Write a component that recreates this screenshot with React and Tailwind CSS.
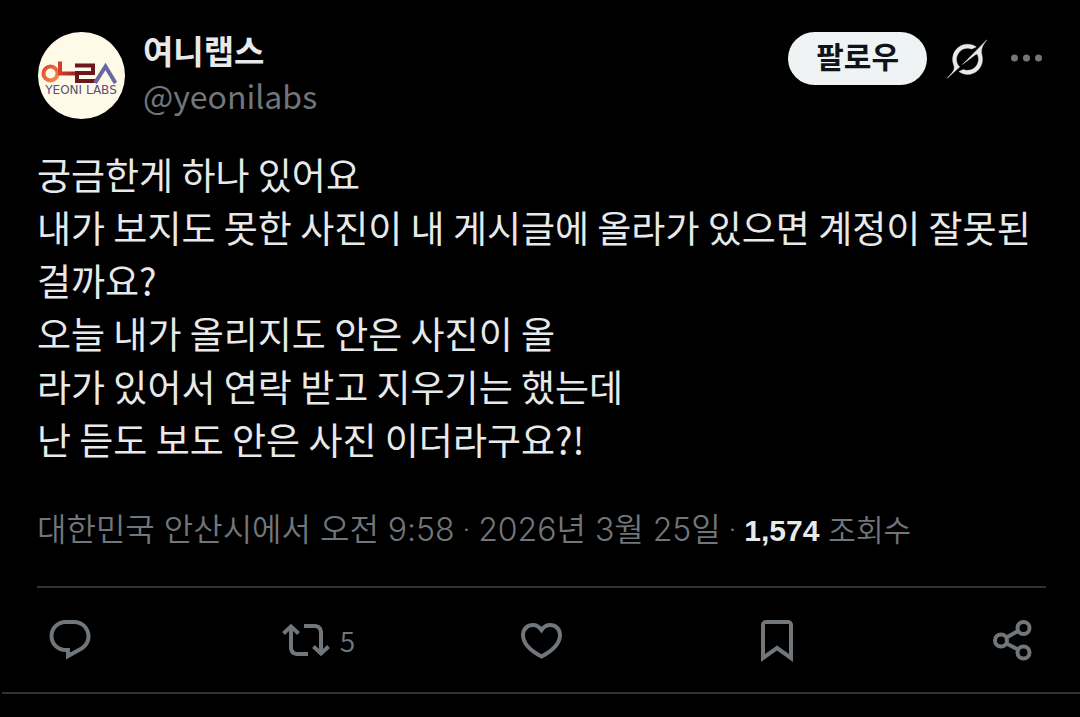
const icons = {
  reply:
    "M1.751 10c0-4.42 3.584-8 8.005-8h4.366c4.49 0 8.129 3.64 8.129 8.13 0 2.96-1.607 5.68-4.196 7.11l-8.054 4.46v-3.69h-.067c-4.49.1-8.183-3.51-8.183-8.01zm8.005-6c-3.317 0-6.005 2.69-6.005 6 0 3.37 2.77 6.08 6.138 6.01l.351-.01h1.761v2.3l5.087-2.81c1.951-1.08 3.163-3.13 3.163-5.36 0-3.39-2.744-6.13-6.129-6.13H9.756z",
  repost:
    "M4.5 3.88l4.432 4.14-1.364 1.46L5.5 7.55V16c0 1.1.896 2 2 2H13v2H7.5c-2.209 0-4-1.79-4-4V7.55L1.432 9.48.068 8.02 4.5 3.88zM16.5 6H11V4h5.5c2.209 0 4 1.79 4 4v8.45l2.068-1.93 1.364 1.46-4.432 4.14-4.432-4.14 1.364-1.46 2.068 1.93V8c0-1.1-.896-2-2-2z",
  bookmark:
    "M4 4.5C4 3.12 5.119 2 6.5 2h11C18.881 2 20 3.12 20 4.5v18.44l-8-5.71-8 5.71V4.5zM6.5 4c-.276 0-.5.22-.5.5v14.56l6-4.29 6 4.29V4.5c0-.28-.224-.5-.5-.5h-11z",
  grok:
    "M12.745 20.54l10.97-8.19c.539-.4 1.307-.244 1.564.38 1.349 3.288.746 7.241-1.938 9.955-2.683 2.714-6.417 3.31-9.83 1.954l-3.728 1.745c5.347 3.697 11.84 2.782 15.898-1.324 3.219-3.255 4.216-7.692 3.284-11.693l.008.009c-1.351-5.878.332-8.227 3.782-13.031L33 0l-4.54 4.59v-.014L12.743 20.544m-2.263 1.987c-3.837-3.707-3.175-9.446.1-12.755 2.42-2.449 6.388-3.448 9.852-1.979l3.72-1.737c-.67-.49-1.53-1.017-2.515-1.387-4.455-1.854-9.789-.931-13.41 2.728-3.483 3.523-4.579 8.94-2.697 13.561 1.405 3.454-.899 5.898-3.22 8.364C1.49 30.2.666 31.074 0 32l10.478-9.466",
};

const lines = [
  "궁금한게 하나 있어요",
  "내가 보지도 못한 사진이 내 게시글에 올라가 있으면 계정이 잘못된 걸까요?",
  "오늘 내가 올리지도 안은 사진이 올",
  "라가 있어서 연락 받고 지우기는 했는데",
  "난 듣도 보도 안은 사진 이더라구요?!",
];

const Avatar = () => (
  <svg viewBox="0 0 87 87" className="size-[87px] shrink-0 rounded-full bg-[#fff9e8]">
    <defs>
      <linearGradient id="ring" x1="0" y1="0" x2="1" y2="1">
        <stop offset="0" stopColor="#dd4a2c" />
        <stop offset="1" stopColor="#f58a4c" />
      </linearGradient>
      <linearGradient id="bar" x1="21" x2="41" y1="0" y2="0" gradientUnits="userSpaceOnUse">
        <stop offset="0" stopColor="#d8402f" />
        <stop offset="1" stopColor="#8e1f26" />
      </linearGradient>
    </defs>
    <g fill="none" strokeWidth="4">
      <circle cx="12.500" cy="41.500" r="7" stroke="url(#ring)" />
      <path d="M22 29.500v12h17" stroke="url(#bar)" />
      <path d="M37 33.500h18v7.500H39v8h18" stroke="#6b1720" />
      <path d="M57 51L67.500 34.500L77.500 51" stroke="#6868a0" />
    </g>
    <text
      x="43"
      y="62"
      textAnchor="middle"
      fontSize="12"
      fill="#55507c"
      className="font-['DejaVu_Sans']"
    >
      YEONI LABS
    </text>
  </svg>
);

const Icon = ({ d }) => (
  <svg viewBox="0 0 24 24" fill="currentColor" className="size-12 shrink-0">
    <path d={d} />
  </svg>
);

const HeartIcon = () => (
  <svg viewBox="0 0 48 48" fill="none" stroke="currentColor" strokeWidth="4" className="size-12 shrink-0">
    <path d="M23.500 14C21 10.500 18 9 15 9C9.500 9 5 13 5 19C5 27.500 13 35 23.500 40.500C34 35 42 27.500 42 19C42 13 37.500 9 32 9C29 9 26 10.500 23.500 14Z" />
  </svg>
);

const ShareIcon = () => (
  <svg viewBox="0 0 48 48" fill="none" stroke="currentColor" strokeWidth="4" className="size-12 shrink-0">
    <circle cx="12" cy="24.500" r="6" />
    <circle cx="34.500" cy="12" r="6" />
    <circle cx="34.500" cy="36.500" r="6" />
    <path d="M17.500 21.500L29 15M17.500 27.500L29 33.500" />
  </svg>
);

const Dot = () => <span className="font-['Roboto'] whitespace-pre">{" · "}</span>;

const App = () => {
  return (
    <main className="min-h-screen bg-black pl-[2px] font-['Noto_Sans_CJK_KR',sans-serif] text-[#e7e9ea]">
      <article className="border-b-2 border-[#2f3336] pt-8">
        <header className="flex items-start gap-[18px] pr-[33px] pl-9">
          <Avatar />
          <div className="min-w-0 flex-1">
            <h1 className="text-[33px] leading-9 font-bold">여니랩스</h1>
            <a href="#profile" className="block text-[32px] leading-[54px] text-[#71767b]">
              @yeonilabs
            </a>
          </div>
          <div className="flex items-center gap-5">
            <button className="h-[53px] rounded-full bg-[#eff3f4] px-7 pb-2 text-[30px] leading-[44px] font-bold text-[#0f1419]">
              팔로우
            </button>
            <button aria-label="Grok">
              <svg
                viewBox="0 0 33 32"
                fill="currentColor"
                stroke="currentColor"
                strokeWidth="0.300"
                className="size-10"
              >
                <path d={icons.grok} />
              </svg>
            </button>
            <button aria-label="더 보기" className="text-[#71767b]">
              <svg viewBox="0 0 40 40" fill="currentColor" className="size-10">
                <circle cx="7.500" cy="19" r="3.500" />
                <circle cx="19.500" cy="19" r="3.500" />
                <circle cx="31.500" cy="19" r="3.500" />
              </svg>
            </button>
          </div>
        </header>

        <div className="pt-[26px] pr-8 pl-[35px] text-[37px] leading-[53px]">
          {lines.map((line) => (
            <p key={line}>{line}</p>
          ))}
        </div>

        <p className="px-[35px] pt-[39px] text-[32px] leading-[50px] font-[350] text-[#71767b] font-['Inter','Noto_Sans_CJK_KR',sans-serif]">
          대한민국 안산시에서 오전 9:58
          <Dot />
          2026년 3월 25일
          <Dot />
          <b className="font-['Liberation_Sans'] text-[30px] font-bold text-[#e7e9ea]">1,574</b>{" "}
          <span className="text-[30px]">조회수</span>
        </p>

        <div className="mr-[34px] ml-[35px] mt-[30px] border-t-2 border-[#2f3336]" />

        <div className="flex py-7 pr-[43px] pl-11 text-[#71767b]">
          <button aria-label="답글" className="flex flex-1">
            <Icon d={icons.reply} />
          </button>
          <button aria-label="재게시" className="flex flex-1 items-center gap-2.5">
            <Icon d={icons.repost} />
            <span className="text-[28px] leading-12 font-[350]">5</span>
          </button>
          <button aria-label="마음에 들어요" className="flex flex-1">
            <HeartIcon />
          </button>
          <button aria-label="북마크" className="flex flex-1">
            <Icon d={icons.bookmark} />
          </button>
          <button aria-label="공유">
            <ShareIcon />
          </button>
        </div>
      </article>
    </main>
  );
};

export default App;
